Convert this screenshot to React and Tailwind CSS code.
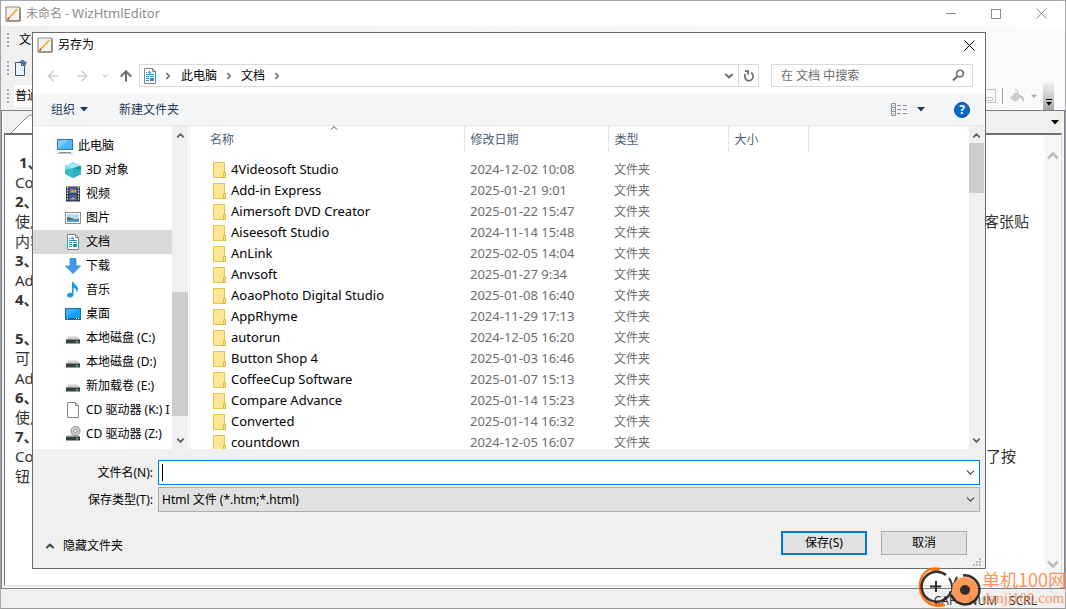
import {
  ArrowLeft,
  ArrowRight,
  ArrowUp,
  ChevronDown,
  ChevronRight,
  ChevronUp,
} from "lucide-react";

const files = [
  ["4Videosoft Studio", "2024-12-02 10:08"],
  ["Add-in Express", "2025-01-21 9:01"],
  ["Aimersoft DVD Creator", "2025-01-22 15:47"],
  ["Aiseesoft Studio", "2024-11-14 15:48"],
  ["AnLink", "2025-02-05 14:04"],
  ["Anvsoft", "2025-01-27 9:34"],
  ["AoaoPhoto Digital Studio", "2025-01-08 16:40"],
  ["AppRhyme", "2024-11-29 17:13"],
  ["autorun", "2024-12-05 16:20"],
  ["Button Shop 4", "2025-01-03 16:46"],
  ["CoffeeCup Software", "2025-01-07 15:13"],
  ["Compare Advance", "2025-01-14 15:23"],
  ["Converted", "2025-01-14 16:32"],
  ["countdown", "2024-12-05 16:07"],
];

const editorLines = [
  { text: "1、", bold: true, indent: true },
  { text: "Co" },
  { text: "2、", bold: true },
  { text: "使用", tail: "客张贴" },
  { text: "内容" },
  { text: "3、", bold: true },
  { text: "Ad" },
  { text: "4、", bold: true },
  { text: "" },
  { text: "5、", bold: true },
  { text: "可以" },
  { text: "Ad" },
  { text: "6、", bold: true },
  { text: "使用" },
  { text: "7、", bold: true },
  { text: "Co", tail: "了按", short: true },
  { text: "钮" },
];

function AppIcon() {
  return (
    <svg width="16" height="16" viewBox="0 0 16 16" className="shrink-0">
      <rect x="1" y="1" width="14" height="14" rx="1" fill="#f3f3f6" stroke="#a08a76" strokeWidth="1.2" />
      <path d="M1.500 15H15V2" fill="none" stroke="#7d6552" />
      <path d="M3 13 12.500 3" stroke="#f4b02a" strokeWidth="1.800" />
      <path d="M2.500 13.500 4 12" stroke="#6b5232" strokeWidth="1.400" />
    </svg>
  );
}

function Caret({ className }) {
  return (
    <svg width="8" height="5" viewBox="0 0 8 5" className={className}>
      <path d="M0 0h8L4 4.500z" fill="currentColor" />
    </svg>
  );
}

function Grip() {
  return (
    <svg width="3" height="16" viewBox="0 0 3 16" fill="#a9a9ad">
      <path d="M0 1h2v2H0zM0 5h2v2H0zM0 9h2v2H0zM0 13h2v2H0z" />
    </svg>
  );
}

function ResizeGrip({ className }) {
  return (
    <svg width="8" height="8" viewBox="0 0 8 8" fill="#b9b9b9" className={className}>
      <path d="M6 0h2v2H6zM3 3h2v2H3zM6 3h2v2H6zM0 6h2v2H0zM3 6h2v2H3zM6 6h2v2H6z" />
    </svg>
  );
}

function PcIcon() {
  return (
    <svg width="16" height="16" viewBox="0 0 16 16">
      <rect x="0.5" y="1.500" width="15" height="10" fill="#4db5fb" stroke="#3578a8" />
      <path d="M1 11V2h11z" fill="#7bcbff" />
      <path d="M2 14.500h12" stroke="#7d93a6" />
      <path d="M0 15.500h16" stroke="#b9c6d0" />
    </svg>
  );
}

function CubeIcon() {
  return (
    <svg width="16" height="16" viewBox="0 0 16 16">
      <path d="M0 3.500 8 0l8 3.500L8 6z" fill="#9be6ef" />
      <path d="M0 3.500 8 6v10l-8-4z" fill="#7adbe6" />
      <path d="M16 3.500 8 6v10l8-4z" fill="#1597ab" />
      <path d="M0 8 8 6v10l-8-4z" fill="#35bccb" />
      <path d="m8 6 8 2v4l-8 4z" fill="#2bb3c4" />
    </svg>
  );
}

function VideoIcon() {
  return (
    <svg width="16" height="16" viewBox="0 0 16 16">
      <rect x="1" y="0.5" width="14" height="15" fill="#333" />
      <path d="M2.500 1v14M13.500 1v14" stroke="#e8e8e8" strokeWidth="1.400" strokeDasharray="1.400 1.400" />
      <rect x="4" y="1.500" width="8" height="6" fill="#3a6bc0" />
      <rect x="4" y="8.500" width="8" height="6" fill="#2b5fb8" />
      <path d="M5 6.500 7.500 3l2 2 1.500-2v3.500zM5 13.500l3-2.500 3 2.500z" fill="#e0a92e" />
      <path d="M6 2h2v2H6zM9 10h2v1.500H9z" fill="#c9462e" />
    </svg>
  );
}

function PictureIcon() {
  return (
    <svg width="16" height="16" viewBox="0 0 16 16">
      <rect x="0.5" y="2.500" width="15" height="11" fill="#fff" stroke="#8f8f8f" />
      <rect x="2" y="4" width="12" height="8" fill="#b9dcf6" />
      <path d="M2 7q3 0 6 1.500t6 0V11H2z" fill="#3b6f78" />
      <path d="M2 10q6-1 12 .5V12H2z" fill="#5b9bd0" />
    </svg>
  );
}

function DocumentIcon() {
  return (
    <svg width="16" height="16" viewBox="0 0 16 16">
      <path d="M2.500.5h8l3 3v12h-11z" fill="#fff" stroke="#848484" />
      <path d="M10.500.5v3h3" fill="none" stroke="#848484" />
      <path d="M4 4.500h1M6.500 4.500H9M4 6.500h8M4 8.500h3M8 8.500h4M4 10.500h3M4 12.500h3" stroke="#2d8fd4" />
      <path d="M8 10h4v3H8z" fill="#4a84a8" />
      <path d="m6 5 1.500-2L9 7" fill="none" stroke="#2f9be0" />
    </svg>
  );
}

function DownloadIcon() {
  return (
    <svg width="16" height="16" viewBox="0 0 16 16">
      <path d="M5 .5h6V8h4.500L8 15.500.5 8H5z" fill="#3d9be9" stroke="#2e7fc5" strokeWidth="0.700" />
    </svg>
  );
}

function MusicIcon() {
  return (
    <svg width="16" height="16" viewBox="0 0 16 16">
      <path d="M7 0h1.500c.5 3 4.500 3.500 4.500 7 0 1.500-.5 2.500-1.500 3.500.5-3-1-4-3-4.500v6.500c0 1.800-1.700 3-3.500 3S2 14.500 2 13.200C2 11.500 4.500 10.300 7 11z" fill="#139af0" />
    </svg>
  );
}

function DesktopIcon() {
  return (
    <svg width="16" height="16" viewBox="0 0 16 16">
      <rect x="0.5" y="2.500" width="15" height="11" fill="#18a0fb" stroke="#1470ad" />
      <path d="M1 11.500V3h11z" fill="#3bb0ff" />
      <path d="M1 12.500h14" stroke="#0c5b91" />
      <path d="M2 12.500h1M11 12.500h1M13 12.500h1" stroke="#fff" />
    </svg>
  );
}

function DriveIcon() {
  return (
    <svg width="16" height="16" viewBox="0 0 16 16">
      <path d="M3.500 6.500h9l2.500 3H1z" fill="#cfcfcf" />
      <path d="M1 9.500h14v4H1z" fill="#3c3c3c" />
      <path d="M1 9.500h14" stroke="#8a8a8a" />
      <path d="M11 11h2v1.500h-2z" fill="#35e04a" />
    </svg>
  );
}

function PageIcon() {
  return (
    <svg width="16" height="16" viewBox="0 0 16 16">
      <path d="M2.500.5h8l3 3v12h-11z" fill="#fff" stroke="#8a8a8a" />
      <path d="M10.500.5v3h3" fill="none" stroke="#8a8a8a" />
    </svg>
  );
}

function DiscDriveIcon() {
  return (
    <svg width="16" height="16" viewBox="0 0 16 16">
      <path d="M3.500 8.500h9l2.500 2H1z" fill="#cfcfcf" />
      <circle cx="10.500" cy="5" r="4.500" fill="#d5d5d5" stroke="#8b8b8b" />
      <circle cx="10.500" cy="5" r="1.700" fill="#fff" stroke="#888" />
      <path d="M1 10.500h14v4H1z" fill="#3c3c3c" />
      <path d="M11 12h2v1.500h-2z" fill="#35e04a" />
    </svg>
  );
}

function FolderIcon() {
  return (
    <svg width="13" height="16" viewBox="0 0 13 16" className="shrink-0">
      <path d="M.5.5h11v10h1v5H.5z" fill="#ffe694" stroke="#e8c34d" />
      <path d="M10.500 15.500v-5h2v5z" fill="#ffdf7a" stroke="#e3b93f" />
    </svg>
  );
}

const places = [
  { label: "此电脑", icon: PcIcon, root: true },
  { label: "3D 对象", icon: CubeIcon },
  { label: "视频", icon: VideoIcon },
  { label: "图片", icon: PictureIcon },
  { label: "文档", icon: DocumentIcon, active: true },
  { label: "下载", icon: DownloadIcon },
  { label: "音乐", icon: MusicIcon },
  { label: "桌面", icon: DesktopIcon },
  { label: "本地磁盘 (C:)", icon: DriveIcon },
  { label: "本地磁盘 (D:)", icon: DriveIcon },
  { label: "新加载卷 (E:)", icon: DriveIcon },
  { label: "CD 驱动器 (K:) I", icon: PageIcon },
  { label: "CD 驱动器 (Z:)", icon: DiscDriveIcon },
];

function CloseIcon() {
  return (
    <svg width="11" height="11" viewBox="0 0 11 11" stroke="currentColor" fill="none">
      <path d="m.5.5 10 10M10.500.5l-10 10" />
    </svg>
  );
}

function ScrollArrow({ down }) {
  return (
    <svg width="12" height="9" viewBox="0 0 12 9" fill="none" stroke="currentColor" strokeWidth="3" className="shrink-0">
      <path d={down ? "m1 1.500 5 5 5-5" : "m1 7.500 5-5 5 5"} />
    </svg>
  );
}

function Watermark() {
  return (
    <div className="absolute right-0 bottom-0 flex items-end text-[#ff8a4c] opacity-90">
      <svg width="64" height="42" viewBox="0 0 64 42" fill="none">
        <path d="M22 2C8-1 1 10 2 21c1 12 11 20 25 17" stroke="#ff6a00" strokeWidth="2.500" />
        <path d="M11 3q5-3 11 0l-4 2zM14 38q7 4 13 0l-5-2z" fill="#ff6a00" />
        <path d="M28 8A15 15 0 1 0 33 24" stroke="#231815" strokeWidth="2.500" />
        <path d="M18 14v11M12 19.500h11" stroke="#231815" strokeWidth="2" />
        <path d="M31 11q4 6 3 13M39 10l-3 7" stroke="#231815" strokeWidth="2" />
        <circle cx="47" cy="23" r="13" fill="#ff8f4a" />
        <path d="M45 8.500A14.500 14.500 0 1 1 33 27" stroke="#231815" strokeWidth="2.500" />
        <circle cx="47" cy="23" r="5" fill="#231815" />
      </svg>
      <div className="flex flex-col pb-0.5">
        <span className="font-['Noto_Sans_CJK_SC',sans-serif] text-[18px] leading-5">单机100网</span>
        <span className="font-['Liberation_Serif',serif] text-[15px] leading-[18px]">danji100.com</span>
      </div>
    </div>
  );
}

function EditorWindow() {
  return (
    <div className="flex h-full flex-col border-x border-t border-[#a3a6ac] bg-[#f0f0f0]">
      <header className="flex h-[25px] items-center bg-white pl-1 text-[#8c8c8c]">
        <AppIcon />
        <h1 className="ml-[5px] flex-1 text-[12px]">
          未命名 - <span className="text-[13px]">WizHtmlEditor</span>
        </h1>
        <div className="flex items-center gap-[35px] pr-[18px]">
          <button aria-label="最小化" className="h-px w-[10px] bg-[#8c8c8c]" />
          <button aria-label="最大化" className="size-[10px] border border-[#8c8c8c]" />
          <button aria-label="关闭">
            <CloseIcon />
          </button>
        </div>
      </header>

      <div className="bg-gradient-to-r from-[#f0f0f0] to-[#fbfbfb] text-[12px] text-black">
        <div className="flex h-7 items-center gap-[9px] pl-1.5">
          <Grip />
          <button>文件(F)</button>
        </div>
        <div className="flex h-7 items-center gap-1 pl-1.5">
          <Grip />
          <button aria-label="新建">
            <svg width="16" height="18" viewBox="0 0 16 18">
              <path d="M1.500 3.500h6l3 3v10h-9z" fill="#eaf3ff" stroke="#3c5573" />
              <path d="M7.500 3.500v3h3" fill="none" stroke="#3c5573" />
              <path d="M5 3q4-4 6.500 0l1.500-.5-1.500 4L8 5l1.500-.3Q8 2.500 5 3z" fill="#4c6ea5" />
            </svg>
          </button>
        </div>
        <div className="flex h-7 items-center justify-between pl-1.5">
          <div className="flex h-[22px] items-center gap-1">
            <Grip />
            <span className="flex h-full w-24 items-center bg-white pl-px">普通</span>
          </div>
          <div className="flex h-full items-center pr-[11px] text-[#a9a9a9]">
            <svg width="16" height="16" viewBox="0 0 16 16" fill="none" stroke="#c4c4c4">
              <path d="M0 1.500h15.500v13H0M0 9.500h12.500v3H0" />
            </svg>
            <span className="mx-1.5 h-4 w-px bg-[#a9a9a9]" />
            <svg width="16" height="16" viewBox="0 0 16 16">
              <path d="M1 10 7 4l6 5-7 5z" fill="#cdcdcd" />
              <path d="M6 1.500q3-1 3 5" fill="none" stroke="#b5b5b5" />
              <path d="M11 7q4 1 4 7-2-1-3-5z" fill="#b5b5b5" />
            </svg>
            <Caret className="mx-1.5 w-1.5" />
            <button
              aria-label="工具栏选项"
              className="flex h-full w-[11px] items-end justify-center bg-gradient-to-b from-[#f5f5f5] to-[#a5a5a5] pb-1 text-black"
            >
              <svg width="6" height="7" viewBox="0 0 6 7">
                <path d="M0 .5h6" stroke="currentColor" />
                <path d="M0 3h6L3 6.500z" fill="currentColor" />
              </svg>
            </button>
          </div>
        </div>
      </div>

      <main className="flex min-h-0 flex-1 flex-col border border-[#7c7d87] bg-[#f6f6f6] px-0.5 pb-0.5">
        <div className="flex h-[22px] items-center justify-between bg-[#f0f0f0] pr-[3px] pl-1">
          <svg width="30" height="22" viewBox="0 0 30 22" fill="#fff" stroke="#8c8c8c">
            <path d="M2 23 19 6q2-2 5-2h8v19" />
          </svg>
          <Caret className="text-black" />
        </div>
        <div className="flex min-h-0 flex-1 border-t-2 border-r border-b border-l border-t-[#6f6f6f] border-r-[#dcdcdc] border-b-[#dcdcdc] border-l-[#6f6f6f] bg-white">
          <div className="flex-1 overflow-hidden pt-[18px] pl-2.5 text-[15px] text-[#333]">
            {editorLines.map((line, i) => (
              <p
                key={i}
                className={`flex justify-between ${line.bold ? "h-[19px] leading-[19px] font-bold" : "h-5 leading-5"} ${
                  line.indent ? "pl-1" : ""
                }`}
              >
                <span>{line.text}</span>
                {line.tail && <span className={line.short ? "pr-7" : "pr-[15px]"}>{line.tail}</span>}
              </p>
            ))}
          </div>
          <div className="flex w-[17px] flex-col items-center justify-between bg-[#f8f8f8] py-4 text-[#bfbfbf]">
            <ScrollArrow />
            <ScrollArrow down />
          </div>
        </div>
      </main>

      <footer className="flex h-5 items-center justify-end gap-3 border-b border-[#9a9a9a] pt-1 pr-7 text-[12px] text-[#333]">
        <span>CAP</span>
        <span>NUM</span>
        <span>SCRL</span>
      </footer>
    </div>
  );
}

function NavigationBar() {
  return (
    <div className="flex h-[37px] items-center px-3 text-[12px]">
      <div className="flex w-[94px] shrink-0 items-center text-[#d0d0d0]">
        <button aria-label="后退">
          <ArrowLeft size={16} strokeWidth={2.5} />
        </button>
        <button aria-label="前进" className="ml-[13px]">
          <ArrowRight size={16} strokeWidth={2.5} />
        </button>
        <button aria-label="最近" className="ml-[11px]">
          <ChevronDown size={8} strokeWidth={4} />
        </button>
        <button aria-label="上移" className="ml-[9px] text-[#6d6d6d]">
          <ArrowUp size={16} strokeWidth={3} />
        </button>
      </div>
      <div className="flex h-[23px] flex-1 items-center border border-[#d9d9d9]">
        <span className="ml-0.5">
          <DocumentIcon />
        </span>
        <ChevronRight size={10} strokeWidth={4} className="mr-2 ml-[5px] text-[#6d6d6d]" />
        <span>此电脑</span>
        <ChevronRight size={10} strokeWidth={4} className="mx-[7px] text-[#6d6d6d]" />
        <span>文档</span>
        <ChevronRight size={10} strokeWidth={4} className="mx-[7px] text-[#6d6d6d]" />
        <button aria-label="历史" className="ml-auto pr-[3px] text-[#6d6d6d]">
          <ChevronDown size={12} strokeWidth={4} />
        </button>
        <button aria-label="刷新" className="flex h-full w-5 items-center justify-center border-l border-[#d9d9d9]">
          <svg width="12" height="12" viewBox="0 0 12 12" fill="none" stroke="#6d6d6d" strokeWidth="1.700">
            <path d="M2.500 4A4.200 4.200 0 1 0 8 2.800" />
            <path d="M2 1.200h3.200v3.500" />
          </svg>
        </button>
      </div>
      <div className="ml-3 flex h-[23px] w-[202px] items-center border border-[#d9d9d9] pr-[7px] pl-[9px]">
        <input
          aria-label="搜索"
          placeholder="在 文档 中搜索"
          className="min-w-0 flex-1 outline-none placeholder:text-[#6d6d6d]"
        />
        <svg width="13" height="13" viewBox="0 0 13 13" fill="none" stroke="#6d6d6d">
          <circle cx="8" cy="4.500" r="3.300" strokeWidth="1.600" />
          <path d="m5.500 7-4.500 4.500" strokeWidth="2" />
        </svg>
      </div>
    </div>
  );
}

function CommandBar() {
  return (
    <div className="flex h-8 items-center border-b border-[#e5e7ea] bg-[#f5f6f7] pr-[15px] pl-[18px] text-[12px] text-[#1e395b]">
      <button className="flex items-center gap-[5px]">
        组织
        <Caret />
      </button>
      <button className="ml-[31px]">新建文件夹</button>
      <button aria-label="视图" className="ml-auto flex items-center gap-2">
        <svg width="18" height="13" viewBox="0 0 18 13" fill="none" stroke="#8a8f96">
          <path d="M.5.5h4v12h-4zM.5 4.500h4M.5 8.500h4" />
          <path d="M6 2.500h4M12 2.500h4M6 6.500h4M12 6.500h4M6 10.500h4M12 10.500h4" />
          <path d="M2 10.500h1" stroke="#e04040" />
          <path d="M2 2.500h1M2 6.500h1" stroke="#4a7ec0" />
        </svg>
        <Caret />
      </button>
      <button
        aria-label="帮助"
        className="ml-[29px] flex size-4 items-center justify-center rounded-full border border-[#0b5394] bg-[#0a68c8] text-[12px] leading-none font-bold text-white"
      >
        ?
      </button>
    </div>
  );
}

function Sidebar() {
  return (
    <nav className="w-[139px] shrink-0 overflow-hidden pt-2 text-[12px] whitespace-nowrap">
      {places.map(({ label, icon: Icon, root, active }) => (
        <a
          key={label}
          href="#"
          className={`flex h-6 items-center gap-[5px] ${root ? "pl-6" : "pl-8"} ${active ? "bg-[#d9d9d9]" : ""}`}
        >
          <span className="shrink-0">
            <Icon />
          </span>
          {label}
        </a>
      ))}
    </nav>
  );
}

function FileTable() {
  return (
    <div className="relative min-w-0 flex-1 overflow-hidden border-l border-[#f0f0f0]">
      <ChevronUp size={12} className="absolute -top-1 left-[138px] text-[#555]" />
      <table className="w-full table-fixed text-left">
        <thead className="text-[12px] text-[#4c607a]">
          <tr>
            {[
              ["名称", "w-[274px] pl-5"],
              ["修改日期", "w-36 pl-1.5"],
              ["类型", "w-[120px] pl-1.5"],
              ["大小", "w-20 pl-1.5"],
            ].map(([title, cls]) => (
              <th key={title} className={`h-[27px] border-r border-[#e5e5e5] p-0 font-normal ${cls}`}>
                {title}
              </th>
            ))}
            <th className="p-0" />
          </tr>
        </thead>
        <tbody className="before:block before:h-1.5">
          {files.map(([name, date]) => (
            <tr key={name} className="h-[21px] text-[#6d6d6d]">
              <td className="p-0 pl-[23px]">
                <div className="flex h-[21px] items-center gap-[5px] text-[13px] text-black">
                  <FolderIcon />
                  {name}
                </div>
              </td>
              <td className="p-0 pl-1.5 align-top text-[13px] leading-5">{date}</td>
              <td className="p-0 pl-1.5 text-[12px] leading-5">文件夹</td>
              <td className="p-0" />
              <td className="p-0" />
            </tr>
          ))}
        </tbody>
      </table>
    </div>
  );
}

function SaveDialog() {
  return (
    <div
      role="dialog"
      aria-label="另存为"
      className="absolute top-8 right-20 bottom-10 left-8 flex flex-col border border-[#6b6b6b] bg-white text-[12px] text-black"
    >
      <div className="flex h-6 items-center pr-2.5 pl-1">
        <AppIcon />
        <h2 className="ml-[5px] flex-1">另存为</h2>
        <button aria-label="关闭">
          <CloseIcon />
        </button>
      </div>
      <NavigationBar />
      <CommandBar />

      <div className="flex min-h-0 flex-1">
        <Sidebar />
        <div className="flex w-4 shrink-0 flex-col items-center bg-[#f0f0f0] pt-1 pb-[3px] text-[#606060]">
          <ChevronUp size={11} strokeWidth={4} />
          <div className="mt-auto mb-[19px] h-[124px] w-full bg-[#cdcdcd]" />
          <ChevronDown size={11} strokeWidth={4} className="shrink-0" />
        </div>
        <div className="w-px shrink-0" />
        <FileTable />
        <div className="flex w-4 shrink-0 flex-col items-center bg-[#f0f0f0] pt-1 pr-px pb-[3px] text-[#606060]">
          <ChevronUp size={11} strokeWidth={4} />
          <div className="mt-0.5 h-[50px] w-full bg-[#cdcdcd]" />
          <ChevronDown size={11} strokeWidth={4} className="mt-auto" />
        </div>
      </div>

      <form className="relative bg-[#f0f0f0] pt-[11px] pr-[5px] pb-[13px]" onSubmit={(e) => e.preventDefault()}>
        <div className="grid grid-cols-[125px_1fr] items-center gap-y-0.5">
          <label htmlFor="file-name" className="pr-[5px] text-right">
            文件名(N):
          </label>
          <div className="relative">
            <input id="file-name" className="block h-[25px] w-full border border-[#0078d7] bg-white px-1 outline-none" />
            <span className="absolute top-1 left-1 h-[17px] w-px bg-black" />
            <ChevronDown size={13} className="absolute top-1.5 right-[3px] text-[#444]" />
          </div>
          <label htmlFor="file-type" className="pr-[5px] text-right">
            保存类型(T):
          </label>
          <div className="relative">
            <select
              id="file-type"
              className="block h-[25px] w-full appearance-none border border-[#adadad] bg-[#e1e1e1] px-[3px]"
            >
              <option>Html 文件 (*.htm;*.html)</option>
            </select>
            <ChevronDown size={13} className="absolute top-1.5 right-[3px] text-[#444]" />
          </div>
        </div>
        <div className="mt-[19px] flex h-6 items-center gap-3.5 pr-[13px] pl-[11px]">
          <button type="button" className="mr-auto flex items-center gap-[7px] pt-1.5">
            <ChevronUp size={12} strokeWidth={4} className="text-[#444]" />
            隐藏文件夹
          </button>
          <button type="submit" className="h-6 w-[86px] border-2 border-[#0078d7] bg-[#e1e1e1]">
            保存(S)
          </button>
          <button type="button" className="h-6 w-[86px] border border-[#adadad] bg-[#e1e1e1]">
            取消
          </button>
        </div>
        <ResizeGrip className="absolute right-1 bottom-0.5" />
      </form>
    </div>
  );
}

export default function App() {
  return (
    <div className="relative h-screen overflow-hidden font-['Noto_Sans','Noto_Sans_CJK_SC',sans-serif]">
      <EditorWindow />
      <SaveDialog />
      <Watermark />
    </div>
  );
}
